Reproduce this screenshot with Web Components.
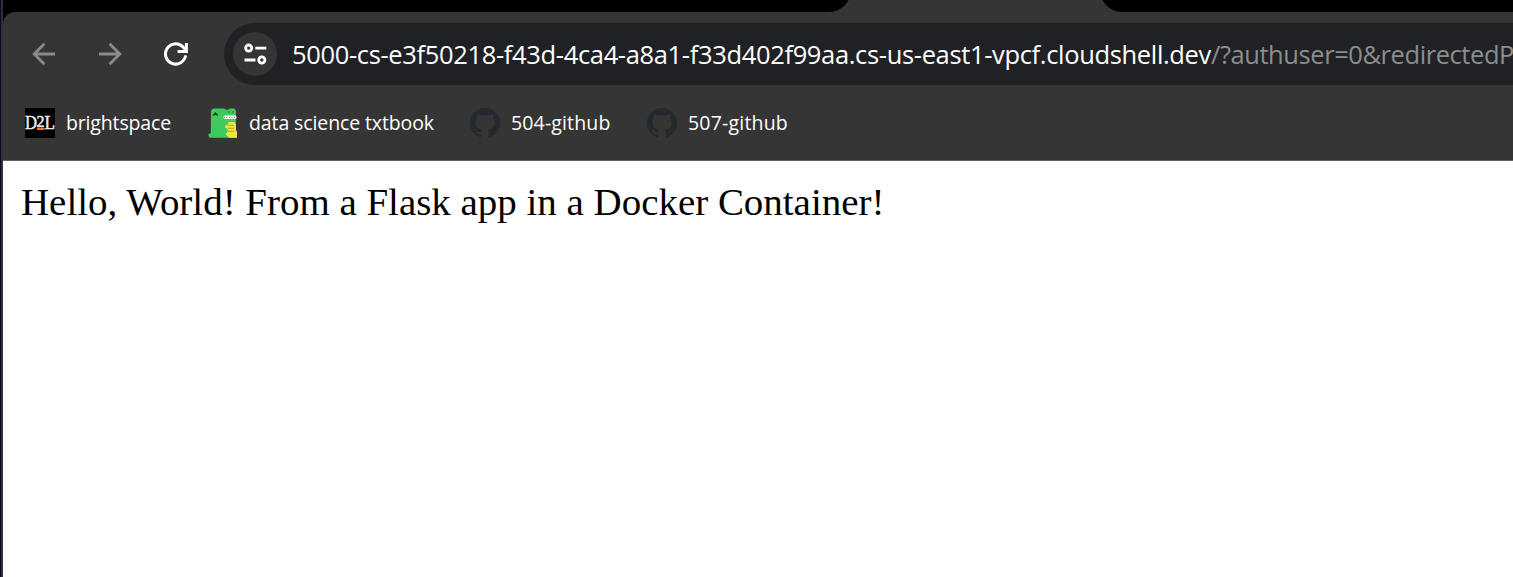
<!DOCTYPE html>
<html lang="en">
<head>
<meta charset="utf-8">
<title>Browser window</title>
<style>
html,body{margin:0;height:100%;overflow:hidden;background:#fff}
</style>
</head>
<body>
<browser-window>
  <tab-strip slot="tabs"></tab-strip>
  <nav-bar slot="nav">
    <fit-text w="919" style="color:#fff">5000-cs-e3f50218-f43d-4ca4-a8a1-f33d402f99aa.cs-us-east1-vpcf.cloudshell.dev</fit-text>
    <fit-text w="303" style="color:#8c8d8f">/?authuser=0&amp;redirectedP</fit-text>
  </nav-bar>
  <bookmark-bar slot="marks">
    <book-mark icon="d2l" w="105" style="width:183px">brightspace</book-mark>
    <book-mark icon="dino" w="185" style="width:262px">data science txtbook</book-mark>
    <book-mark icon="github" w="99.5" style="width:177px">504-github</book-mark>
    <book-mark icon="github" w="100" style="width:177px">507-github</book-mark>
  </bookmark-bar>
  <page-view>Hello, World! From a Flask app in a Docker Container!</page-view>
</browser-window>
<script>
function define(name, html, setup) {
  customElements.define(name, class extends HTMLElement {
    constructor() {
      super();
      this.attachShadow({mode: 'open'}).innerHTML = html;
    }
    connectedCallback() { if (setup) setup(this, this.shadowRoot); }
  });
}

// Containers are defined before their children, so that text is measured in its final font.
define('browser-window', `<style>
:host{display:flex;height:100vh;box-sizing:border-box}
.edge{width:2px;border-left:1px solid #0a0b1e;background:#30303a;flex:none}
.main{flex:1;min-width:0;display:flex;flex-direction:column;background:#000}
</style><div class="edge"></div><div class="main"><slot name="tabs"></slot><slot name="nav"></slot><slot name="marks"></slot><slot></slot></div>`);

define('tab-strip', `<style>
:host{display:flex;justify-content:space-between;height:12px;overflow:hidden;background:#353535;align-items:flex-end}
i{height:40px;background:#000;flex:none}
.l{width:848px;border-bottom-right-radius:22px}
.r{width:413px;border-bottom-left-radius:22px}
</style><i class="l"></i><i class="r"></i>`);

define('nav-bar', `<style>
:host{display:flex;height:84px;box-sizing:border-box;padding:11px 0 11px 23px;align-items:center;background:#353535;border-top-left-radius:12px;overflow:hidden}
.b{width:36px;height:36px;margin-right:30px;flex:none}
.omni{display:flex;align-items:center;flex:1;min-width:0;height:62px;background:#202124;border-radius:31px 0 0 31px;overflow:hidden;font:25.500px "Open Sans","Noto Sans",sans-serif}
.chip{width:44px;height:44px;margin:0 15px 0 9px;flex:none}
</style>
<svg class="b" viewBox="0 0 36 36" fill="none" stroke="#8a8a8a" stroke-width="2.8"><path d="M29 18H8.500M18.400 7.800L8.200 18l10.200 10.200"/></svg>
<svg class="b" viewBox="0 0 36 36" fill="none" stroke="#8a8a8a" stroke-width="2.8"><path d="M7 18h20.500M17.600 7.800L27.800 18l-10.200 10.200"/></svg>
<svg class="b" viewBox="0 0 36 36" fill="none" stroke="#fff" stroke-width="3"><path d="M27.600 19.400A10.100 10.100 0 1 1 25 11.100l3 3.200"/><path d="M28.400 7v8.400H19.600"/></svg>
<div class="omni">
<svg class="chip" viewBox="0 0 44 44"><circle cx="22" cy="22" r="22" fill="#353535"/><g fill="none" stroke="#fff" stroke-width="2.8"><circle cx="15.700" cy="16.100" r="3.100"/><circle cx="28.800" cy="28" r="3.100"/><path d="M22.300 16.100h11M11.500 28h11"/></g></svg>
<slot></slot></div>`);

define('bookmark-bar', `<style>
:host{display:flex;height:65px;box-sizing:border-box;padding:10px 0 0 22px;background:#353535;border-bottom:1px solid #626262}
</style><slot></slot>`);

// Spreads the letters of a text run so that it takes the width given in "w".
function fit(el, span) {
  const extra = parseFloat(el.getAttribute('w')) - span.getBoundingClientRect().width;
  span.style.letterSpacing = (extra / el.textContent.length) + 'px';
}

define('fit-text', `<style>:host{display:block;white-space:pre;flex:none}span{display:inline-block}</style><span><slot></slot></span>`,
  (el, root) => fit(el, root.querySelector('span')));

const icons = {
  d2l: `<svg viewBox="0 0 30 30"><path fill="#000" d="M0 0h30v30H0z"/><g font-family="Liberation Serif,serif" font-size="18.500" fill="#eee" stroke="#eee" stroke-width=".5"><text x="0" y="21" textLength="12" lengthAdjust="spacingAndGlyphs">D</text><text x="11.500" y="19" font-size="16">2</text><text x="19.500" y="21" textLength="10.500" lengthAdjust="spacingAndGlyphs">L</text></g><path fill="#e8731d" d="M12 20h7.500v2H12z"/></svg>`,
  dino: `<svg viewBox="0 0 30 30"><path fill="#3ecb5c" d="M3 4Q3 .5 7 .5h9l3 1.500 3-1.500h4Q28 1 28 5v24.800H2Q0 28.500 .300 26.500L2.800 25z"/><path fill="#f4e23c" d="M17 15l3-1h6.500l1.500 3v5l1 2v5.800h-8l-3-3z"/><path stroke="#ad9b2e" stroke-width=".9" d="M20 17.300h6M20 20.300h6M20 23.300h6"/><path fill="#3ecb5c" d="M14 13h5.500l1 2-1.500 2.500h-4zM15 20h3.500l1.500 2-1 3H14z"/><rect x="15.500" y="7.500" width="13" height="3.500" rx="1.500" fill="#fff"/><path stroke="#555" stroke-width="1" stroke-dasharray="1 1.500" d="M16 9.300h12.500"/><path fill="none" stroke="#173d24" stroke-width="1.300" d="M5.300 7.500l2-2.500 2.400 2.500"/><path fill="#1d7734" d="M20 3.500h2v1h-2zM24 3.500h2v1h-2z"/></svg>`,
  github: `<svg viewBox="0 0 16 16"><path fill="#24292f" d="M8 0C3.580 0 0 3.580 0 8c0 3.540 2.290 6.530 5.470 7.590.4.070.55-.17.55-.38 0-.19-.01-.82-.01-1.490-2.010.37-2.530-.49-2.690-.94-.09-.23-.48-.94-.82-1.130-.28-.15-.68-.52-.01-.53.63-.01 1.080.58 1.230.82.72 1.210 1.870.87 2.330.66.07-.52.28-.87.51-1.070-1.780-.2-3.640-.89-3.640-3.950 0-.87.31-1.590.82-2.150-.08-.2-.36-1.020.08-2.120 0 0 .67-.21 2.200.82.64-.18 1.320-.27 2-.27s1.360.09 2 .27c1.530-1.040 2.200-.82 2.200-.82.44 1.100.16 1.920.08 2.120.51.56.82 1.270.82 2.150 0 3.070-1.870 3.750-3.650 3.950.29.25.54.73.54 1.480 0 1.070-.01 1.930-.01 2.200 0 .21.15.46.55.38A8.010 8.010 0 0 0 16 8c0-4.420-3.580-8-8-8z"/></svg>`
};
define('book-mark', `<style>
:host{display:flex;align-items:center;height:34px;flex:none;box-sizing:border-box;color:#fff;font:19.500px/34px "Open Sans","Noto Sans",sans-serif}
.i{width:30px;height:30px;margin:0 11px 0 0;flex:none}
.i svg{display:block;width:30px;height:30px}
.t{white-space:pre}
</style><div class="i"></div><span class="t"><slot></slot></span>`,
  (el, root) => {
    root.querySelector('.i').innerHTML = icons[el.getAttribute('icon')];
    fit(el, root.querySelector('.t'));
  });

define('page-view', `<style>
:host{display:block;flex:1;background:#fff;padding:18px 18px;color:#000;font:38.950px/46px "Liberation Serif",serif;white-space:nowrap}
</style><slot></slot>`);
</script>
</body>
</html>
